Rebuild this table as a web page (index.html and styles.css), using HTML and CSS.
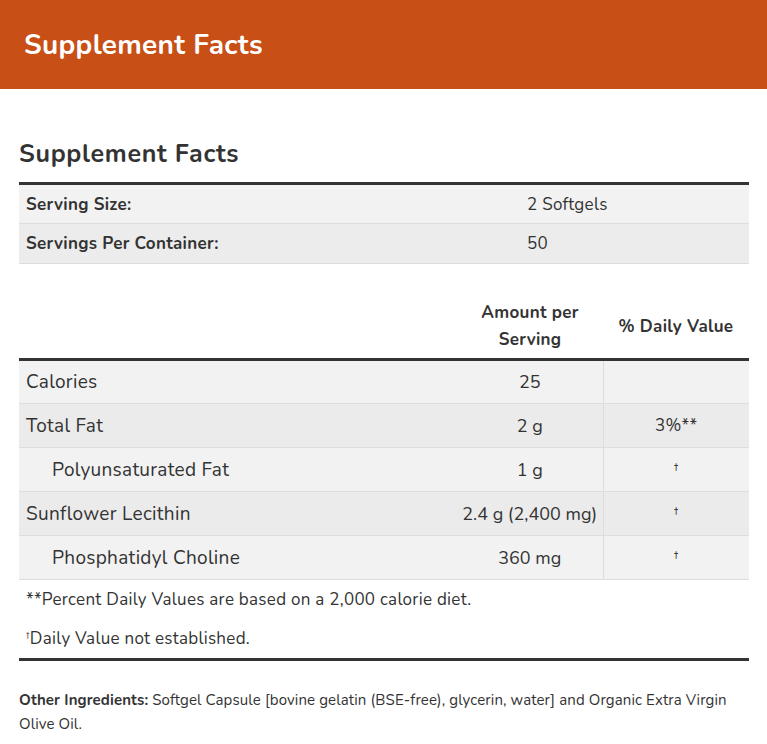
FILE: index.html
```html
<!DOCTYPE html>
<html lang="en">
<head>
<meta charset="utf-8">
<title>Supplement Facts</title>
<link rel="stylesheet" href="styles.css">
</head>
<body>
<header class="banner">
  <h1 class="banner-title">Supplement Facts</h1>
</header>
<main class="content">
  <h2 class="facts-title">Supplement Facts</h2>
  <table class="serving">
    <tbody>
      <tr><th class="serving-label">Serving Size:</th><td class="serving-value">2 Softgels</td></tr>
      <tr><th class="serving-label">Servings Per Container:</th><td class="serving-value">50</td></tr>
    </tbody>
  </table>
  <table class="nutrients">
    <colgroup>
      <col class="c-name">
      <col class="c-amount">
      <col class="c-dv">
    </colgroup>
    <thead>
      <tr>
        <th class="col-name"></th>
        <th class="col-amount">Amount per<br>Serving</th>
        <th class="col-dv">% Daily Value</th>
      </tr>
    </thead>
    <tbody>
      <tr><td class="name">Calories</td><td class="amount">25</td><td class="dv"></td></tr>
      <tr><td class="name">Total Fat</td><td class="amount">2 g</td><td class="dv">3%**</td></tr>
      <tr><td class="name sub">Polyunsaturated Fat</td><td class="amount">1 g</td><td class="dv"><span class="dagger">†</span></td></tr>
      <tr><td class="name">Sunflower Lecithin</td><td class="amount">2.4 g (2,400 mg)</td><td class="dv"><span class="dagger">†</span></td></tr>
      <tr><td class="name sub">Phosphatidyl Choline</td><td class="amount">360 mg</td><td class="dv"><span class="dagger">†</span></td></tr>
    </tbody>
    <tfoot>
      <tr><td class="note" colspan="3">**Percent Daily Values are based on a 2,000 calorie diet.</td></tr>
      <tr><td class="note last" colspan="3"><span class="dagger-sm">†</span>Daily Value not established.</td></tr>
    </tfoot>
  </table>
  <p class="other"><strong>Other Ingredients:</strong> Softgel Capsule [bovine gelatin (BSE-free), glycerin, water] and Organic Extra Virgin Olive Oil.</p>
</main>
</body>
</html>
```
FILE: styles.css
```css
* { box-sizing: border-box; }
body {
  margin: 0;
  font-family: "Nunito", "Open Sans", "Noto Sans", sans-serif;
  color: #333;
  background: #fff;
}
.banner {
  background: #c84f16;
  height: 89px;
  display: flex;
  align-items: center;
  padding: 0 24px;
}
.banner-title {
  margin: 0;
  color: #fff;
  font-size: 28px;
  font-weight: 700;
  letter-spacing: 0.3px;
}
.content {
  padding: 0 18px 0 19px;
}
.facts-title {
  margin: 0;
  padding-top: 49px;
  font-size: 25px;
  line-height: 32px;
  font-weight: 700;
  color: #333;
  letter-spacing: 0.7px;
}
.serving {
  width: 730px;
  margin-top: 12px;
  border-collapse: collapse;
  border-top: 3px solid #333;
  font-size: 17px;
  letter-spacing: 0.3px;
}
.serving tr { background: #f2f2f2; }
.serving tr:nth-child(2) { background: #ececec; }
.serving-label {
  text-align: left;
  font-weight: 700;
  width: 500px;
  padding: 0 7px;
  height: 40px;
  border-bottom: 1px solid #ddd;
}
.serving-value {
  padding: 0 8px;
  border-bottom: 1px solid #ddd;
}
.nutrients {
  width: 730px;
  table-layout: fixed;
  margin-top: 30px;
  border-collapse: collapse;
  font-size: 19px;
  letter-spacing: 0.3px;
}
.c-name { width: 438px; }
.c-amount { width: 146px; }
.c-dv { width: 146px; }
.nutrients thead th {
  font-size: 17px;
  font-weight: 700;
  line-height: 27px;
  padding: 5px 4px 5px;
  border-bottom: 3px solid #333;
}
.col-amount { text-align: center; }
.col-dv { text-align: center; }
.nutrients tbody tr { background: #f2f2f2; }
.nutrients tbody tr:nth-child(even) { background: #ebebeb; }
.nutrients tbody td {
  height: 44px;
  padding: 0 4px;
  border-bottom: 1px solid #ddd;
  white-space: nowrap;
}
.nutrients tbody td.name { padding-left: 7px; }
.nutrients tbody td.name.sub { padding-left: 33px; }
.name { text-align: left; }
.amount {
  text-align: center;
  font-size: 18px;
  letter-spacing: 0;
}
.dv {
  text-align: center;
  border-left: 1px solid #ddd;
  font-size: 17px;
}
.dagger { font-size: 13px; vertical-align: 2px; }
.note {
  font-size: 17px;
  letter-spacing: 0.28px;
  padding: 0 7px;
  height: 40px;
}
.note.last { border-bottom: 3px solid #333; }
.dagger-sm { font-size: 11px; vertical-align: 3px; }
.other {
  margin: 27px 0 0;
  font-size: 15px;
  line-height: 24px;
  letter-spacing: 0.12px;
  color: #333;
}
.other strong { font-weight: 700; }
```
